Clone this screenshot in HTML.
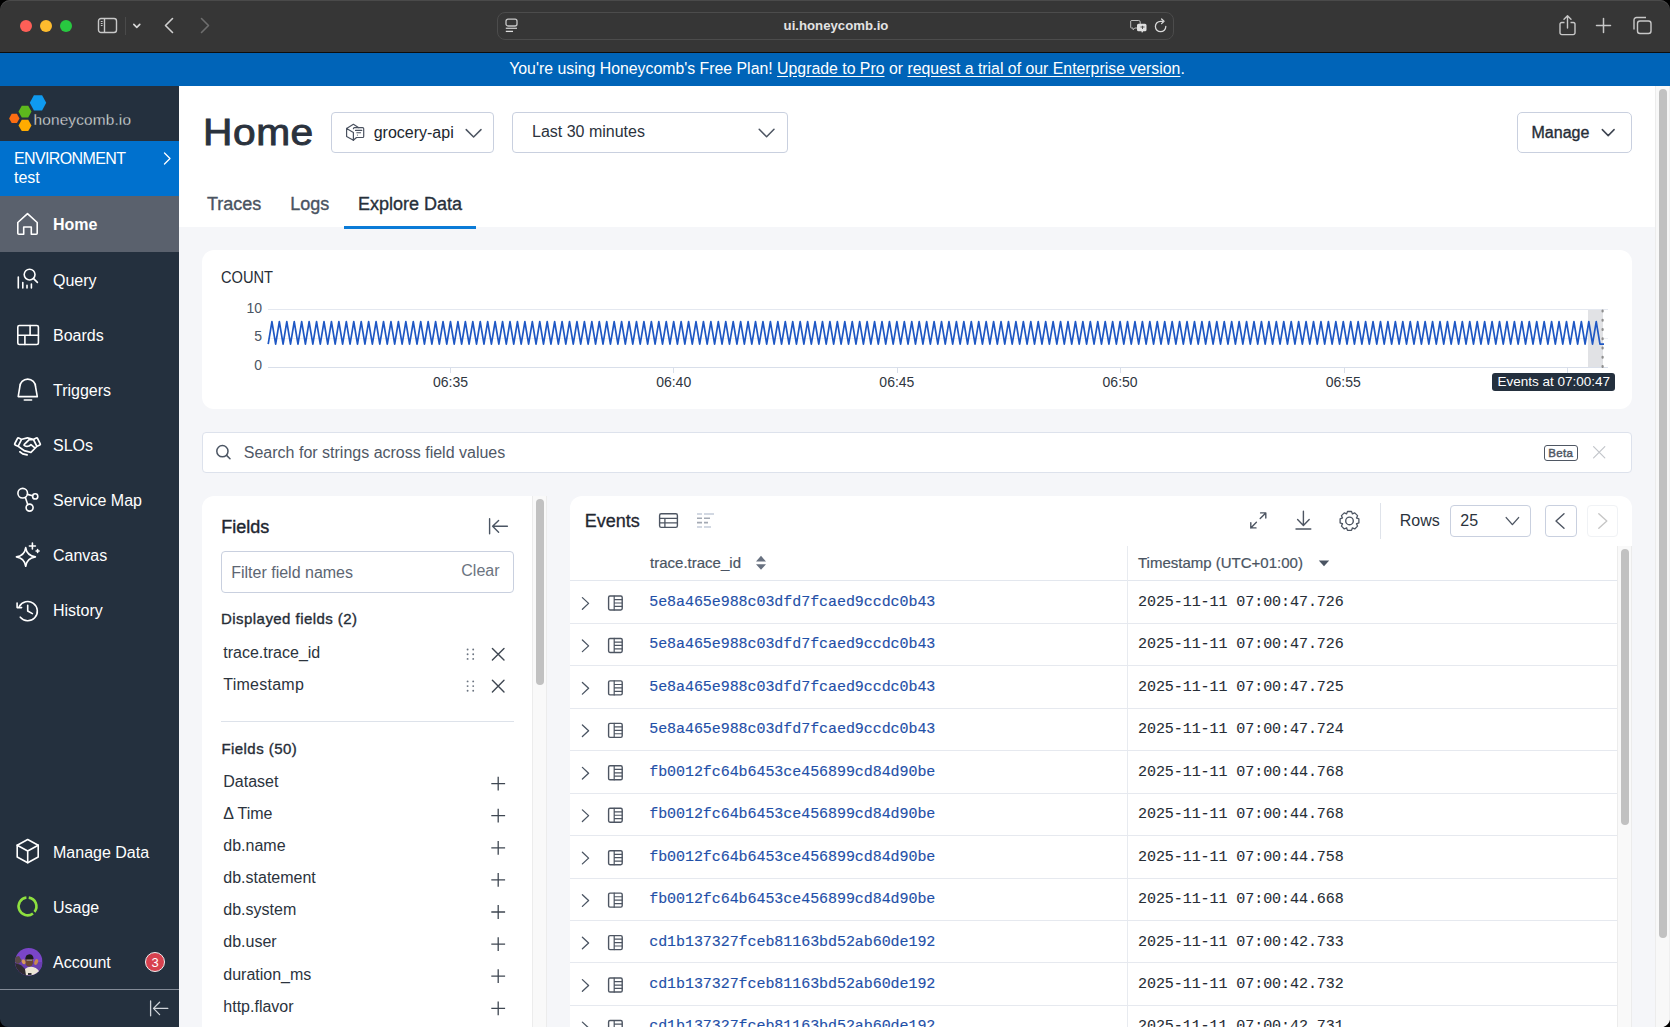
<!DOCTYPE html>
<html><head><meta charset="utf-8">
<style>
*{box-sizing:border-box;margin:0;padding:0}
html,body{width:1670px;height:1027px;overflow:hidden;background:#000;font-family:"Liberation Sans",sans-serif}
.a{position:absolute}
svg{position:absolute;overflow:visible}
#chrome{left:0;top:0;width:1670px;height:53px;background:#363636;border-radius:10px 10px 0 0;border-bottom:1px solid #0d0d0d;box-shadow:inset 0 1px 0 #4a4a4a}
#banner{left:0;top:53px;width:1670px;height:33px;background:#0064b8}
#side{left:0;top:86px;width:179px;height:941px;background:#24303e;border-bottom-left-radius:8px;overflow:hidden}
#main{left:179px;top:86px;width:1476px;height:941px;background:#f5f6f9;overflow:hidden}
#vscroll{left:1655px;top:86px;width:15px;height:941px;background:#f8f8f8;border-left:1px solid #ececec;border-right:1px solid #efefef}
.t{position:absolute;white-space:nowrap;line-height:1}
</style></head><body>
<div id="chrome" class="a">

<div class="a" style="left:20px;top:20px;width:12px;height:12px;border-radius:50%;background:#fe5f57"></div>
<div class="a" style="left:40px;top:20px;width:12px;height:12px;border-radius:50%;background:#febc2e"></div>
<div class="a" style="left:60px;top:20px;width:12px;height:12px;border-radius:50%;background:#28c840"></div>
<svg style="left:97px;top:17px" width="22" height="18" viewBox="0 0 22 18"><rect x="1.5" y="1.5" width="18" height="14" rx="2.5" fill="none" stroke="#c8c8c8" stroke-width="1.4"/><line x1="7.5" y1="1.5" x2="7.5" y2="15.5" stroke="#c8c8c8" stroke-width="1.4"/><line x1="3.8" y1="4.5" x2="5.6" y2="4.5" stroke="#c8c8c8" stroke-width="1"/><line x1="3.8" y1="6.5" x2="5.6" y2="6.5" stroke="#c8c8c8" stroke-width="1"/><line x1="3.8" y1="8.5" x2="5.6" y2="8.5" stroke="#c8c8c8" stroke-width="1"/></svg>
<div class="a" style="left:125px;top:17px;width:1px;height:18px;background:#4a4a4a"></div>
<svg style="left:132px;top:22px" width="10" height="8" viewBox="0 0 10 8"><path d="M1.8 2.4 L4.8 5.4 L7.8 2.4" fill="none" stroke="#d8d8d8" stroke-width="1.6" stroke-linecap="round" stroke-linejoin="round"/></svg>
<svg style="left:163px;top:17px" width="12" height="17" viewBox="0 0 12 17"><path d="M9.5 1.5 L2.5 8.5 L9.5 15.5" fill="none" stroke="#cfcfcf" stroke-width="1.6" stroke-linecap="round" stroke-linejoin="round"/></svg>
<svg style="left:199px;top:17px" width="12" height="17" viewBox="0 0 12 17"><path d="M2.5 1.5 L9.5 8.5 L2.5 15.5" fill="none" stroke="#6e6e6e" stroke-width="1.6" stroke-linecap="round" stroke-linejoin="round"/></svg>
<div class="a" style="left:497px;top:12px;width:677px;height:28px;border-radius:8px;border:1px solid #4c4c4c;background:#363636"></div>
<svg style="left:505px;top:18px" width="14" height="16" viewBox="0 0 14 16"><rect x="1" y="1.2" width="11" height="6.8" rx="2" fill="none" stroke="#c8c8c8" stroke-width="1.3"/><line x1="0.8" y1="10.3" x2="12" y2="10.3" stroke="#c8c8c8" stroke-width="1.3"/><line x1="0.8" y1="13.4" x2="8" y2="13.4" stroke="#dddddd" stroke-width="1.3"/></svg>
<div class="t" style="left:700px;top:19px;width:272px;text-align:center;font-size:13.2px;font-weight:bold;color:#e3e3e3">ui.honeycomb.io</div>
<svg style="left:1130px;top:19px" width="18" height="15" viewBox="0 0 18 15"><path d="M1.2 1.5 h7.5 a1.5 1.5 0 0 1 1.5 1.5 v4.5 a1.5 1.5 0 0 1 -1.5 1.5 h-4 l-1.5 1.8 l-0.3 -1.8 h-1.7 a0.5 .5 0 0 1 -.5 -.5 v-6.5 z" fill="none" stroke="#bdbdbd" stroke-width="1"/><path d="M8.5 4.8 h6.5 a1.5 1.5 0 0 1 1.5 1.5 v4.5 a1.5 1.5 0 0 1 -1.5 1.5 h-1.8 l-1.2 1.8 l-0.6 -1.8 h-2.9 a1.5 1.5 0 0 1 -1.5 -1.5 v-4.5 a1.5 1.5 0 0 1 1.5 -1.5z" fill="#e0e0e0"/><path d="M10.5 8 h4 M12.5 6.8 v3.2" stroke="#444" stroke-width="0.9"/></svg>
<svg style="left:1154px;top:18px" width="14" height="16" viewBox="0 0 14 16"><path d="M11.8 8.5 A5.2 5.2 0 1 1 6.6 3.3 H9" fill="none" stroke="#d8d8d8" stroke-width="1.3" stroke-linecap="round"/><path d="M7.6 1 L10 3.3 L7.6 5.6" fill="none" stroke="#d8d8d8" stroke-width="1.3" stroke-linecap="round" stroke-linejoin="round"/></svg>
<svg style="left:1558px;top:14px" width="19" height="22" viewBox="0 0 19 22"><path d="M6.5 8.5 H3.8 a1.8 1.8 0 0 0 -1.8 1.8 v8.5 a1.8 1.8 0 0 0 1.8 1.8 h11.4 a1.8 1.8 0 0 0 1.8 -1.8 v-8.5 a1.8 1.8 0 0 0 -1.8 -1.8 H12.5" fill="none" stroke="#c8c8c8" stroke-width="1.4"/><path d="M9.5 14 V2 M6 5.2 L9.5 1.7 L13 5.2" fill="none" stroke="#c8c8c8" stroke-width="1.4" stroke-linecap="round" stroke-linejoin="round"/></svg>
<svg style="left:1595px;top:17px" width="17" height="17" viewBox="0 0 17 17"><path d="M8.5 1.5 V15.5 M1.5 8.5 H15.5" stroke="#c8c8c8" stroke-width="1.5" stroke-linecap="round"/></svg>
<svg style="left:1632px;top:16px" width="21" height="19" viewBox="0 0 21 19"><rect x="5.5" y="5" width="13.5" height="12.5" rx="2.5" fill="none" stroke="#c8c8c8" stroke-width="1.4"/><path d="M2 13.5 V4 a2.5 2.5 0 0 1 2.5 -2.5 H14" fill="none" stroke="#c8c8c8" stroke-width="1.4"/></svg>

</div>
<div id="banner" class="a"></div>
<div class="t" style="left:12px;top:61px;width:1670px;text-align:center;font-size:15.85px;color:#fff">You're using Honeycomb's Free Plan! <span style="text-decoration:underline;text-underline-offset:2px">Upgrade to Pro</span> or <span style="text-decoration:underline;text-underline-offset:2px">request a trial of our Enterprise version</span>.</div>
<div id="side" class="a">
<svg style="left:0;top:0" width="60" height="54" viewBox="0 86 60 54">
<path d="M29.80 102.80 L33.90 95.20 L42.10 95.20 L46.20 102.80 L42.10 110.40 L33.90 110.40 Z" fill="#0f9af0"/>
<path d="M18.50 111.60 L21.75 105.80 L28.25 105.80 L31.50 111.60 L28.25 117.40 L21.75 117.40 Z" fill="#5db81d"/>
<path d="M9.10 118.40 L11.70 113.70 L16.90 113.70 L19.50 118.40 L16.90 123.10 L11.70 123.10 Z" fill="#fb6d12"/>
<path d="M18.50 125.40 L21.75 119.70 L28.25 119.70 L31.50 125.40 L28.25 131.10 L21.75 131.10 Z" fill="#ffab00"/>
</svg>
<div class="t" style="left:33.5px;top:26px;font-size:15.4px;color:#f2f2f2;letter-spacing:0.15px;-webkit-text-stroke:0.4px #24303e">honeycomb.io</div><div class="a" style="left:0;top:55px;width:179px;height:55px;background:#0071ce"></div>
<div class="t" style="left:14px;top:65px;font-size:16px;color:#fff;letter-spacing:-0.62px">ENVIRONMENT</div>
<div class="t" style="left:14px;top:84px;font-size:16px;color:#fff">test</div>
<svg style="left:162px;top:65px" width="10" height="15" viewBox="0 0 10 15"><path d="M2.5 2 L8 7.5 L2.5 13" fill="none" stroke="#fff" stroke-width="1.3" stroke-linecap="round" stroke-linejoin="round"/></svg>
<div class="a" style="left:0;top:110px;width:179px;height:56px;background:#5a616d"></div><svg style="left:10px;top:119px" width="35" height="35" viewBox="10 205 35 35"><path d="M17.8 222.5 L27.5 213.6 L37.2 222.5 V233.2 a1 1 0 0 1 -1 1 H31.3 V227 H23.7 V234.2 H18.8 a1 1 0 0 1 -1 -1 Z" fill="none" stroke="#ffffff" stroke-width="1.6" stroke-linecap="round" stroke-linejoin="round"/></svg><div class="t" style="left:53px;top:131px;font-size:16px;color:#fff;font-weight:bold">Home</div><svg style="left:10px;top:176px" width="35" height="35" viewBox="10 262 35 35"><circle cx="29.6" cy="274.6" r="5.4" fill="none" stroke="#ffffff" stroke-width="1.6" stroke-linecap="round" stroke-linejoin="round"/><path d="M33.6 278.6 L37.4 282.4" fill="none" stroke="#ffffff" stroke-width="1.6" stroke-linecap="round" stroke-linejoin="round"/><path d="M18.3 277 V288 M22.8 282.5 V288 M27 285.2 V288 M31.4 284 V288" fill="none" stroke="#ffffff" stroke-width="1.6" stroke-linecap="round" stroke-linejoin="round"/></svg><div class="t" style="left:53px;top:186.5px;font-size:16px;color:#fff;font-weight:normal">Query</div><svg style="left:10px;top:232px" width="35" height="35" viewBox="10 318 35 35"><rect x="17.8" y="325.5" width="20.6" height="19" rx="1.6" fill="none" stroke="#ffffff" stroke-width="1.6" stroke-linecap="round" stroke-linejoin="round"/><path d="M17.8 335.3 H38.4 M30.1 325.5 V335.3 M24.9 335.3 V344.5" fill="none" stroke="#ffffff" stroke-width="1.6" stroke-linecap="round" stroke-linejoin="round"/></svg><div class="t" style="left:53px;top:241.60000000000002px;font-size:16px;color:#fff;font-weight:normal">Boards</div><svg style="left:10px;top:286px" width="35" height="35" viewBox="10 372 35 35"><path d="M18.2 396.6 L19.8 387 a7.9 7.9 0 0 1 15.8 0 L37.3 396.6 Z" fill="none" stroke="#ffffff" stroke-width="1.6" stroke-linecap="round" stroke-linejoin="round"/><path d="M24.3 400 H31.6" fill="none" stroke="#ffffff" stroke-width="1.6" stroke-linecap="round" stroke-linejoin="round"/></svg><div class="t" style="left:53px;top:296.8px;font-size:16px;color:#fff;font-weight:normal">Triggers</div><svg style="left:10px;top:344px" width="35" height="35" viewBox="10 430 35 35"><path transform="translate(13.82 431.84) scale(0.1069)" d="M254.3,107.91,228.78,56.85a16,16,0,0,0-21.47-7.15L182.44,62.13,130.05,48.27a8.14,8.14,0,0,0-4.1,0L73.56,62.13,48.69,49.7a16,16,0,0,0-21.47,7.15L1.69,107.9a16,16,0,0,0,7.15,21.47l27,13.51,55.49,39.63a8.060,8.060,0,0,0,2.71,1.25l64,16a8,8,0,0,0,7.6-2.1l55.07-55.08,26.42-13.210a16,16,0,0,0,7.15-21.46Zm-54.89,33.37L165,113.72a8,8,0,0,0-10.68.61C136.51,132.27,116.66,130,104,122L147.24,80h31.81l27.21,54.41ZM41.53,64,62,74.22,36.43,125.27,16,115.06Zm116,119.13L99.42,168.610l-49.2-35.14,28-56L128,64.280l9.8,2.59-45,43.71-.08.09a16,16,0,0,0,2.72,24.81c20.56,13.13,45.370,11,64.91-5L188,152.66Zm62-57.870-25.52-51L214.47,64,240,115.06Zm-87.75,92.67a8,8,0,0,1-7.75,6.06,8.13,8.13,0,0,1-1.95-.24L80.41,213.33a7.89,7.89,0,0,1-2.71-1.25L51.35,193.26a8,8,0,0,1,9.3-13l25.11,17.94L126,208.24A8,8,0,0,1,131.82,217.94Z" fill="#fff"/></svg><div class="t" style="left:53px;top:351.9px;font-size:16px;color:#fff;font-weight:normal">SLOs</div><svg style="left:10px;top:396px" width="35" height="35" viewBox="10 482 35 35"><circle cx="22.7" cy="493.2" r="4.8" fill="none" stroke="#ffffff" stroke-width="1.6" stroke-linecap="round" stroke-linejoin="round"/><circle cx="35.2" cy="496.4" r="2.6" fill="none" stroke="#ffffff" stroke-width="1.6" stroke-linecap="round" stroke-linejoin="round"/><circle cx="29.6" cy="507.6" r="3.5" fill="none" stroke="#ffffff" stroke-width="1.6" stroke-linecap="round" stroke-linejoin="round"/><path d="M27.4 494.4 L32.6 495.7 M25.3 497.3 L27.7 504.6" fill="none" stroke="#ffffff" stroke-width="1.6" stroke-linecap="round" stroke-linejoin="round"/></svg><div class="t" style="left:53px;top:407.1px;font-size:16px;color:#fff;font-weight:normal">Service Map</div><svg style="left:10px;top:452px" width="35" height="35" viewBox="10 538 35 35"><path d="M25.7 547.6 Q26.8 555.6 35.4 556.9 Q26.8 558.2 25.7 566.3 Q24.6 558.2 16.4 556.9 Q24.6 555.6 25.7 547.6 Z" fill="none" stroke="#ffffff" stroke-width="1.6" stroke-linecap="round" stroke-linejoin="round"/><path d="M32.4 543 V549 M29.4 546 H35.4" fill="none" stroke="#ffffff" stroke-width="1.6" stroke-linecap="round" stroke-linejoin="round"/><path d="M37.6 549.5 V552.5 M36.1 551 H39.1" fill="none" stroke="#ffffff" stroke-width="1.6" stroke-linecap="round" stroke-linejoin="round"/></svg><div class="t" style="left:53px;top:462.20000000000005px;font-size:16px;color:#fff;font-weight:normal">Canvas</div><svg style="left:10px;top:506px" width="35" height="35" viewBox="10 592 35 35"><path d="M19.3 606.5 A9.6 9.6 0 1 1 20.3 617.2" fill="none" stroke="#ffffff" stroke-width="1.6" stroke-linecap="round" stroke-linejoin="round"/><path d="M17.1 603 V607.6 H21.6" fill="none" stroke="#ffffff" stroke-width="1.6" stroke-linecap="round" stroke-linejoin="round"/><path d="M27.7 605.2 V611 L32.4 613.6" fill="none" stroke="#ffffff" stroke-width="1.6" stroke-linecap="round" stroke-linejoin="round"/></svg><div class="t" style="left:53px;top:517.4px;font-size:16px;color:#fff;font-weight:normal">History</div><svg style="left:10px;top:749px" width="35" height="35" viewBox="10 835 35 35"><path d="M27.7 839.5 L38.2 845.2 V857 L27.7 862.7 L17.2 857 V845.2 Z" fill="none" stroke="#ffffff" stroke-width="1.6" stroke-linecap="round" stroke-linejoin="round"/><path d="M17.2 845.2 L27.7 851 L38.2 845.2 M27.7 851 V862.7" fill="none" stroke="#ffffff" stroke-width="1.6" stroke-linecap="round" stroke-linejoin="round"/></svg><div class="t" style="left:53px;top:758.5px;font-size:16px;color:#fff;font-weight:normal">Manage Data</div><svg style="left:10px;top:806px" width="35" height="35" viewBox="10 892 35 35"><path d="M28.74 897.59 A8.9 8.9 0 0 1 34.51 911.88 M32.98 913.41 A8.9 8.9 0 1 1 26.42 897.57" fill="none" stroke="#8ee03f" stroke-width="2.6"/></svg><div class="t" style="left:53px;top:814px;font-size:16px;color:#fff;font-weight:normal">Usage</div><svg style="left:14.5px;top:861.7px" width="27.5" height="27.5" viewBox="0 0 27.5 27.5"><defs><clipPath id="avc"><circle cx="13.75" cy="13.75" r="13.75"/></clipPath></defs><g clip-path="url(#avc)">
<rect width="27.5" height="27.5" fill="#7a45c8"/>
<rect y="14" width="27.5" height="14" fill="#6a3fb0"/>
<path d="M0 15 L6 17 L11 22 L14 27.5 L0 27.5 Z" fill="#2f2b30"/>
<path d="M0 9 L4 8 L7 13 L3 16 L0 14 Z" fill="#5a4a48"/>
<path d="M10 21 Q13.5 18 18 19 Q24 20 26 27.5 L11 27.5 Z" fill="#ece6d6"/>
<ellipse cx="14.2" cy="13.6" rx="3.9" ry="5" fill="#6b4632"/>
<path d="M10.2 11.2 Q10.5 6.4 14.4 6.2 Q18.4 6.4 18.6 11 Z" fill="#1d1b1f"/>
<rect x="11.6" y="11.6" width="5.6" height="1.4" fill="#9aa0a8" opacity="0.7"/>
<ellipse cx="8.6" cy="13.8" rx="1.8" ry="2.6" fill="#d79a5a" transform="rotate(-25 8.6 13.8)"/>
<ellipse cx="21.2" cy="14" rx="1.8" ry="3" fill="#c8894f" transform="rotate(20 21.2 14)"/>
<rect x="13" y="25" width="3.5" height="2" fill="#333"/>
</g></svg>
<div class="t" style="left:53px;top:868.5px;font-size:16px;color:#fff;font-weight:normal">Account</div><div class="a" style="left:145px;top:866px;width:20px;height:20px;border-radius:50%;background:#d7414f;border:1px solid #f0f0f0"></div>
<div class="t" style="left:145px;top:870px;width:20px;text-align:center;font-size:13px;color:#fff">3</div>
<div class="a" style="left:0;top:903px;width:179px;height:1px;background:#838b97"></div><svg style="left:140px;top:909px" width="35" height="30" viewBox="140 995 35 30"><path d="M150.6 1001 V1015.8 M167.8 1008.4 H153.5 M159.6 1002.2 L153.5 1008.4 L159.6 1014.6" fill="none" stroke="#d0d4da" stroke-width="1.3" stroke-linecap="round" stroke-linejoin="round"/></svg>
</div>
<div id="main" class="a"><div class="a" style="left:-179px;top:-86px;width:1670px;height:1027px">
<div class="a" style="left:179px;top:86px;width:1476.00px;height:141.00px;background:#fff"></div><div class="t" style="left:202.50px;top:114px;font-size:37px;color:#2a323d;transform-origin:0 0;transform:scaleX(1.1);letter-spacing:0.5px;-webkit-text-stroke:0.9px #2a323d">Home</div><div class="a" style="left:331px;top:112px;width:163.00px;height:41.00px;border:1px solid #c9d0df;border-radius:4px;background:#fff"></div><svg style="left:344px;top:122px" width="24" height="22" viewBox="344 122 24 22"><path d="M353.4 124.3 L346.6 128.4 V136.4 L353.4 140.3 M346.6 128.4 L353.4 132.4 V140.3 M353.4 124.3 L358.8 127.7" fill="none" stroke="#4a5260" stroke-width="1.2" stroke-linecap="round" stroke-linejoin="round"/><path d="M353.4 128.7 Q353.4 127.7 354.4 127.7 H362.6 Q363.7 127.7 363.7 128.8 V136.4 Q363.7 137.5 362.6 137.5 H356.5 L353.4 140.3" fill="none" stroke="#4a5260" stroke-width="1.2" stroke-linecap="round" stroke-linejoin="round"/><path d="M355.5 130.4 H361.8 M356.8 132.7 H360.6" fill="none" stroke="#4a5260" stroke-width="1.1" stroke-linecap="round" stroke-linejoin="round"/><circle cx="357.4" cy="135.1" r="0.55" fill="#4a5260"/></svg><div class="t" style="left:373.70px;top:125px;font-size:16px;color:#20262e">grocery-api</div><svg style="left:462px;top:125px" width="24" height="16" viewBox="462 125 24 16"><path d="M466.2 129.6 L473.6 137 L481 129.6" fill="none" stroke="#4d5562" stroke-width="1.5" stroke-linecap="round" stroke-linejoin="round"/></svg><div class="a" style="left:512px;top:112px;width:276.00px;height:41.00px;border:1px solid #c9d0df;border-radius:4px;background:#fff"></div><div class="t" style="left:532.00px;top:124px;font-size:16px;color:#2b323c">Last 30 minutes</div><svg style="left:755px;top:125px" width="24" height="16" viewBox="755 125 24 16"><path d="M759.2 129.2 L766.6 136.8 L774 129.2" fill="none" stroke="#4d5562" stroke-width="1.5" stroke-linecap="round" stroke-linejoin="round"/></svg><div class="a" style="left:1517px;top:112px;width:115.00px;height:41.00px;border:1px solid #c9d0df;border-radius:5px;background:#fff"></div><div class="t" style="left:1531.50px;top:125px;font-size:16px;color:#262d37;-webkit-text-stroke:0.35px #262d37">Manage</div><svg style="left:1598px;top:125px" width="20" height="16" viewBox="1598 125 20 16"><path d="M1602.3 129.6 L1608.2 135.6 L1614.1 129.6" fill="none" stroke="#3d4450" stroke-width="1.5" stroke-linecap="round" stroke-linejoin="round"/></svg><div class="t" style="left:207.00px;top:195px;font-size:18px;color:#4a5361;-webkit-text-stroke:0.35px #4a5361">Traces</div><div class="t" style="left:290.20px;top:195px;font-size:18px;color:#4a5361;-webkit-text-stroke:0.35px #4a5361">Logs</div><div class="t" style="left:358.00px;top:195px;font-size:18px;color:#27303b;-webkit-text-stroke:0.35px #27303b">Explore Data</div><div class="a" style="left:344px;top:226px;width:132.00px;height:3.00px;background:#0b7bd7"></div>
<div class="a" style="left:202px;top:250px;width:1430.00px;height:159.00px;background:#fff;border-radius:12px"></div><div class="t" style="left:221.00px;top:270px;font-size:16px;color:#262d36;transform-origin:0 0;transform:scaleX(0.915)">COUNT</div><div class="t" style="left:200px;top:301px;width:62px;text-align:right;font-size:14px;color:#4b5563">10</div><div class="t" style="left:200px;top:329px;width:62px;text-align:right;font-size:14px;color:#4b5563">5</div><div class="t" style="left:200px;top:358px;width:62px;text-align:right;font-size:14px;color:#4b5563">0</div><div class="a" style="left:268px;top:309px;width:1340.00px;height:1.00px;background:#e4e8f0"></div><div class="a" style="left:268px;top:338px;width:1340.00px;height:1.00px;background:#eef0f5"></div><div class="a" style="left:268px;top:367px;width:1340.00px;height:1.00px;background:#d9dfea"></div><div class="a" style="left:450px;top:368px;width:1.00px;height:5.00px;background:#d9dfea"></div><div class="t" style="left:410.5px;top:375px;width:80px;text-align:center;font-size:14px;color:#2f3640">06:35</div><div class="a" style="left:673px;top:368px;width:1.00px;height:5.00px;background:#d9dfea"></div><div class="t" style="left:633.7px;top:375px;width:80px;text-align:center;font-size:14px;color:#2f3640">06:40</div><div class="a" style="left:897px;top:368px;width:1.00px;height:5.00px;background:#d9dfea"></div><div class="t" style="left:856.9px;top:375px;width:80px;text-align:center;font-size:14px;color:#2f3640">06:45</div><div class="a" style="left:1120px;top:368px;width:1.00px;height:5.00px;background:#d9dfea"></div><div class="t" style="left:1080.1px;top:375px;width:80px;text-align:center;font-size:14px;color:#2f3640">06:50</div><div class="a" style="left:1344px;top:368px;width:1.00px;height:5.00px;background:#d9dfea"></div><div class="t" style="left:1303.3px;top:375px;width:80px;text-align:center;font-size:14px;color:#2f3640">06:55</div><div class="a" style="left:1567px;top:368px;width:1.00px;height:5.00px;background:#d9dfea"></div><div class="a" style="left:1588px;top:310px;width:14.50px;height:57.00px;background:#e1e2e5"></div><svg style="left:0;top:0" width="1670" height="1027" viewBox="0 0 1670 1027"><polyline points="268.20,344.2 271.92,321.6 275.64,344.2 279.36,321.6 283.08,344.2 286.80,321.6 290.52,344.2 294.24,321.6 297.96,344.2 301.68,321.6 305.40,344.2 309.12,321.6 312.84,344.2 316.56,321.6 320.28,344.2 324.00,321.6 327.72,344.2 331.44,321.6 335.16,344.2 338.88,321.6 342.60,344.2 346.32,321.6 350.04,344.2 353.76,321.6 357.48,344.2 361.20,321.6 364.92,344.2 368.64,321.6 372.36,344.2 376.08,321.6 379.80,344.2 383.52,321.6 387.24,344.2 390.96,321.6 394.68,344.2 398.40,321.6 402.12,344.2 405.84,321.6 409.56,344.2 413.28,321.6 417.00,344.2 420.72,321.6 424.44,344.2 428.16,321.6 431.88,344.2 435.60,321.6 439.32,344.2 443.04,321.6 446.76,344.2 450.48,321.6 454.20,344.2 457.92,321.6 461.64,344.2 465.36,321.6 469.08,344.2 472.80,321.6 476.52,344.2 480.24,321.6 483.96,344.2 487.68,321.6 491.40,344.2 495.12,321.6 498.84,344.2 502.56,321.6 506.28,344.2 510.00,321.6 513.72,344.2 517.44,321.6 521.16,344.2 524.88,321.6 528.60,344.2 532.32,321.6 536.04,344.2 539.76,321.6 543.48,344.2 547.20,321.6 550.92,344.2 554.64,321.6 558.36,344.2 562.08,321.6 565.80,344.2 569.52,321.6 573.24,344.2 576.96,321.6 580.68,344.2 584.40,321.6 588.12,344.2 591.84,321.6 595.56,344.2 599.28,321.6 603.00,344.2 606.72,321.6 610.44,344.2 614.16,321.6 617.88,344.2 621.60,321.6 625.32,344.2 629.04,321.6 632.76,344.2 636.48,321.6 640.20,344.2 643.92,321.6 647.64,344.2 651.36,321.6 655.08,344.2 658.80,321.6 662.52,344.2 666.24,321.6 669.96,344.2 673.68,321.6 677.40,344.2 681.12,321.6 684.84,344.2 688.56,321.6 692.28,344.2 696.00,321.6 699.72,344.2 703.44,321.6 707.16,344.2 710.88,321.6 714.60,344.2 718.32,321.6 722.04,344.2 725.76,321.6 729.48,344.2 733.20,321.6 736.92,344.2 740.64,321.6 744.36,344.2 748.08,321.6 751.80,344.2 755.52,321.6 759.24,344.2 762.96,321.6 766.68,344.2 770.40,321.6 774.12,344.2 777.84,321.6 781.56,344.2 785.28,321.6 789.00,344.2 792.72,321.6 796.44,344.2 800.16,321.6 803.88,344.2 807.60,321.6 811.32,344.2 815.04,321.6 818.76,344.2 822.48,321.6 826.20,344.2 829.92,321.6 833.64,344.2 837.36,321.6 841.08,344.2 844.80,321.6 848.52,344.2 852.24,321.6 855.96,344.2 859.68,321.6 863.40,344.2 867.12,321.6 870.84,344.2 874.56,321.6 878.28,344.2 882.00,321.6 885.72,344.2 889.44,321.6 893.16,344.2 896.88,321.6 900.60,344.2 904.32,321.6 908.04,344.2 911.76,321.6 915.48,344.2 919.20,321.6 922.92,344.2 926.64,321.6 930.36,344.2 934.08,321.6 937.80,344.2 941.52,321.6 945.24,344.2 948.96,321.6 952.68,344.2 956.40,321.6 960.12,344.2 963.84,321.6 967.56,344.2 971.28,321.6 975.00,344.2 978.72,321.6 982.44,344.2 986.16,321.6 989.88,344.2 993.60,321.6 997.32,344.2 1001.04,321.6 1004.76,344.2 1008.48,321.6 1012.20,344.2 1015.92,321.6 1019.64,344.2 1023.36,321.6 1027.08,344.2 1030.80,321.6 1034.52,344.2 1038.24,321.6 1041.96,344.2 1045.68,321.6 1049.40,344.2 1053.12,321.6 1056.84,344.2 1060.56,321.6 1064.28,344.2 1068.00,321.6 1071.72,344.2 1075.44,321.6 1079.16,344.2 1082.88,321.6 1086.60,344.2 1090.32,321.6 1094.04,344.2 1097.76,321.6 1101.48,344.2 1105.20,321.6 1108.92,344.2 1112.64,321.6 1116.36,344.2 1120.08,321.6 1123.80,344.2 1127.52,321.6 1131.24,344.2 1134.96,321.6 1138.68,344.2 1142.40,321.6 1146.12,344.2 1149.84,321.6 1153.56,344.2 1157.28,321.6 1161.00,344.2 1164.72,321.6 1168.44,344.2 1172.16,321.6 1175.88,344.2 1179.60,321.6 1183.32,344.2 1187.04,321.6 1190.76,344.2 1194.48,321.6 1198.20,344.2 1201.92,321.6 1205.64,344.2 1209.36,321.6 1213.08,344.2 1216.80,321.6 1220.52,344.2 1224.24,321.6 1227.96,344.2 1231.68,321.6 1235.40,344.2 1239.12,321.6 1242.84,344.2 1246.56,321.6 1250.28,344.2 1254.00,321.6 1257.72,344.2 1261.44,321.6 1265.16,344.2 1268.88,321.6 1272.60,344.2 1276.32,321.6 1280.04,344.2 1283.76,321.6 1287.48,344.2 1291.20,321.6 1294.92,344.2 1298.64,321.6 1302.36,344.2 1306.08,321.6 1309.80,344.2 1313.52,321.6 1317.24,344.2 1320.96,321.6 1324.68,344.2 1328.40,321.6 1332.12,344.2 1335.84,321.6 1339.56,344.2 1343.28,321.6 1347.00,344.2 1350.72,321.6 1354.44,344.2 1358.16,321.6 1361.88,344.2 1365.60,321.6 1369.32,344.2 1373.04,321.6 1376.76,344.2 1380.48,321.6 1384.20,344.2 1387.92,321.6 1391.64,344.2 1395.36,321.6 1399.08,344.2 1402.80,321.6 1406.52,344.2 1410.24,321.6 1413.96,344.2 1417.68,321.6 1421.40,344.2 1425.12,321.6 1428.84,344.2 1432.56,321.6 1436.28,344.2 1440.00,321.6 1443.72,344.2 1447.44,321.6 1451.16,344.2 1454.88,321.6 1458.60,344.2 1462.32,321.6 1466.04,344.2 1469.76,321.6 1473.48,344.2 1477.20,321.6 1480.92,344.2 1484.64,321.6 1488.36,344.2 1492.08,321.6 1495.80,344.2 1499.52,321.6 1503.24,344.2 1506.96,321.6 1510.68,344.2 1514.40,321.6 1518.12,344.2 1521.84,321.6 1525.56,344.2 1529.28,321.6 1533.00,344.2 1536.72,321.6 1540.44,344.2 1544.16,321.6 1547.88,344.2 1551.60,321.6 1555.32,344.2 1559.04,321.6 1562.76,344.2 1566.48,321.6 1570.20,344.2 1573.92,321.6 1577.64,344.2 1581.36,321.6 1585.08,344.2 1588.80,321.6 1592.52,344.2 1596.24,321.6 1599.96,344.2 1604,344.2" fill="none" stroke="#1e57c4" stroke-width="1.7" stroke-linejoin="round"/><line x1="1602.6" y1="310.5" x2="1602.6" y2="367" stroke="#8d8d8d" stroke-width="2.2" stroke-dasharray="0.9 8.35" stroke-linecap="round"/></svg><div class="a" style="left:1492px;top:373px;width:123.00px;height:18.00px;background:#24303e;border-radius:3px"></div><div class="t" style="left:1497.50px;top:375px;font-size:13.5px;color:#fff">Events at 07:00:47</div><div class="a" style="left:202px;top:432px;width:1430.00px;height:41.00px;background:#fff;border:1px solid #dde2ec;border-radius:4px"></div><svg style="left:212px;top:441px" width="24" height="24" viewBox="212 441 24 24"><circle cx="222.4" cy="451.2" r="5.6" fill="none" stroke="#4b5563" stroke-width="1.5" stroke-linecap="round" stroke-linejoin="round"/><path d="M226.6 455.4 L230 458.8" fill="none" stroke="#4b5563" stroke-width="1.5" stroke-linecap="round" stroke-linejoin="round"/></svg><div class="t" style="left:243.80px;top:445px;font-size:16px;color:#4f5866">Search for strings across field values</div><div class="a" style="left:1544px;top:444.5px;width:34.00px;height:16.00px;border:1.8px solid #4f5763;border-radius:3px"></div><div class="t" style="left:1548.30px;top:448px;font-size:11.5px;color:#4f5763;-webkit-text-stroke:0.45px #4f5763;letter-spacing:0.3px">Beta</div><svg style="left:1590px;top:443px" width="20" height="18" viewBox="1590 443 20 18"><path d="M1593.6 446.6 L1604.8 457.8 M1604.8 446.6 L1593.6 457.8" fill="none" stroke="#c2c5ca" stroke-width="1.2" stroke-linecap="round" stroke-linejoin="round"/></svg><div class="a" style="left:202px;top:496px;width:345.00px;height:531.00px;background:#fff;border-radius:12px 0 0 0"></div><div class="a" style="left:532px;top:496px;width:15.00px;height:531.00px;background:#f9f9f9;border-left:1px solid #ececec;border-right:1px solid #ececec"></div><div class="a" style="left:536px;top:499px;width:8.00px;height:186.00px;background:#c1c1c1;border-radius:4px"></div><div class="t" style="left:221.30px;top:518px;font-size:18px;color:#1f2731;-webkit-text-stroke:0.4px #1f2731">Fields</div><svg style="left:484px;top:514px" width="28" height="24" viewBox="484 514 28 24"><path d="M489.6 518.8 V533.8 M507.4 526.3 H492.6 M498.6 520.4 L492.6 526.3 L498.6 532.2" fill="none" stroke="#4b5563" stroke-width="1.4" stroke-linecap="round" stroke-linejoin="round"/></svg><div class="a" style="left:221px;top:551px;width:293.00px;height:42.00px;border:1px solid #c9d0df;border-radius:4px"></div><div class="t" style="left:231.20px;top:565px;font-size:16px;color:#5d6673">Filter field names</div><div class="t" style="left:461.30px;top:563px;font-size:16px;color:#6b7480">Clear</div><div class="t" style="left:221.00px;top:611px;font-size:15px;color:#262d37;letter-spacing:0.45px;-webkit-text-stroke:0.35px #262d37">Displayed fields (2)</div><div class="t" style="left:223.30px;top:645px;font-size:16px;color:#2b333d">trace.trace_id</div><svg style="left:460px;top:644px" width="20" height="20" viewBox="460 644 20 20"><circle cx="467.6" cy="649.50" r="0.95" fill="#6b7480"/><circle cx="467.6" cy="654.20" r="0.95" fill="#6b7480"/><circle cx="467.6" cy="658.90" r="0.95" fill="#6b7480"/><circle cx="473.2" cy="649.50" r="0.95" fill="#6b7480"/><circle cx="473.2" cy="654.20" r="0.95" fill="#6b7480"/><circle cx="473.2" cy="658.90" r="0.95" fill="#6b7480"/></svg><svg style="left:488px;top:644px" width="20" height="20" viewBox="488 644 20 20"><path d="M492.4 648.40 L504 660.00 M504 648.40 L492.4 660.00" fill="none" stroke="#3f4752" stroke-width="1.4" stroke-linecap="round" stroke-linejoin="round"/></svg><div class="t" style="left:223.30px;top:677px;font-size:16px;color:#2b333d;letter-spacing:0.25px">Timestamp</div><svg style="left:460px;top:676px" width="20" height="20" viewBox="460 676 20 20"><circle cx="467.6" cy="681.40" r="0.95" fill="#6b7480"/><circle cx="467.6" cy="686.10" r="0.95" fill="#6b7480"/><circle cx="467.6" cy="690.80" r="0.95" fill="#6b7480"/><circle cx="473.2" cy="681.40" r="0.95" fill="#6b7480"/><circle cx="473.2" cy="686.10" r="0.95" fill="#6b7480"/><circle cx="473.2" cy="690.80" r="0.95" fill="#6b7480"/></svg><svg style="left:488px;top:676px" width="20" height="20" viewBox="488 676 20 20"><path d="M492.4 680.30 L504 691.90 M504 680.30 L492.4 691.90" fill="none" stroke="#3f4752" stroke-width="1.4" stroke-linecap="round" stroke-linejoin="round"/></svg><div class="a" style="left:221px;top:721px;width:293.00px;height:1.00px;background:#dde2ea"></div><div class="t" style="left:221.40px;top:741px;font-size:15px;color:#262d37;letter-spacing:0.45px;-webkit-text-stroke:0.35px #262d37">Fields (50)</div><div class="t" style="left:223.30px;top:774px;font-size:16px;color:#2b333d">Dataset</div><svg style="left:488px;top:773px" width="20" height="20" viewBox="488 773 20 20"><path d="M498.2 776.70 V790.50 M491.3 783.60 H505.1" fill="none" stroke="#3f4752" stroke-width="1.3" stroke-linecap="butt" stroke-linejoin="round"/></svg><div class="t" style="left:223.30px;top:806px;font-size:16px;color:#2b333d">&Delta; Time</div><svg style="left:488px;top:805px" width="20" height="20" viewBox="488 805 20 20"><path d="M498.2 808.80 V822.60 M491.3 815.70 H505.1" fill="none" stroke="#3f4752" stroke-width="1.3" stroke-linecap="butt" stroke-linejoin="round"/></svg><div class="t" style="left:223.30px;top:838px;font-size:16px;color:#2b333d">db.name</div><svg style="left:488px;top:837px" width="20" height="20" viewBox="488 837 20 20"><path d="M498.2 840.90 V854.70 M491.3 847.80 H505.1" fill="none" stroke="#3f4752" stroke-width="1.3" stroke-linecap="butt" stroke-linejoin="round"/></svg><div class="t" style="left:223.30px;top:870px;font-size:16px;color:#2b333d">db.statement</div><svg style="left:488px;top:869px" width="20" height="20" viewBox="488 869 20 20"><path d="M498.2 873.00 V886.80 M491.3 879.90 H505.1" fill="none" stroke="#3f4752" stroke-width="1.3" stroke-linecap="butt" stroke-linejoin="round"/></svg><div class="t" style="left:223.30px;top:902px;font-size:16px;color:#2b333d">db.system</div><svg style="left:488px;top:902px" width="20" height="20" viewBox="488 902 20 20"><path d="M498.2 905.10 V918.90 M491.3 912.00 H505.1" fill="none" stroke="#3f4752" stroke-width="1.3" stroke-linecap="butt" stroke-linejoin="round"/></svg><div class="t" style="left:223.30px;top:934px;font-size:16px;color:#2b333d">db.user</div><svg style="left:488px;top:934px" width="20" height="20" viewBox="488 934 20 20"><path d="M498.2 937.20 V951.00 M491.3 944.10 H505.1" fill="none" stroke="#3f4752" stroke-width="1.3" stroke-linecap="butt" stroke-linejoin="round"/></svg><div class="t" style="left:223.30px;top:967px;font-size:16px;color:#2b333d">duration_ms</div><svg style="left:488px;top:966px" width="20" height="20" viewBox="488 966 20 20"><path d="M498.2 969.30 V983.10 M491.3 976.20 H505.1" fill="none" stroke="#3f4752" stroke-width="1.3" stroke-linecap="butt" stroke-linejoin="round"/></svg><div class="t" style="left:223.30px;top:999px;font-size:16px;color:#2b333d">http.flavor</div><svg style="left:488px;top:998px" width="20" height="20" viewBox="488 998 20 20"><path d="M498.2 1001.40 V1015.20 M491.3 1008.30 H505.1" fill="none" stroke="#3f4752" stroke-width="1.3" stroke-linecap="butt" stroke-linejoin="round"/></svg><div class="a" style="left:570px;top:496px;width:1062.00px;height:531.00px;background:#fff;border-radius:12px 12px 0 0"></div><div class="t" style="left:584.70px;top:512px;font-size:18px;color:#1f2731;-webkit-text-stroke:0.3px #1f2731">Events</div><svg style="left:655px;top:510px" width="28" height="22" viewBox="655 510 28 22"><rect x="659.6" y="513.8" width="17.8" height="13.6" rx="1.6" fill="none" stroke="#4d5562" stroke-width="1.4" stroke-linecap="round" stroke-linejoin="round"/><path d="M659.6 518.3 H677.4 M659.6 522.9 H677.4 M664.9 518.3 V527.4" fill="none" stroke="#4d5562" stroke-width="1.3" stroke-linecap="round" stroke-linejoin="round"/></svg><svg style="left:693px;top:510px" width="26" height="22" viewBox="693 510 26 22"><path d="M697 514 H702 M704 514 H714" fill="none" stroke="#c3cbd9" stroke-width="1.6" stroke-linecap="butt" stroke-linejoin="round"/><path d="M697 518.3 H702 M704 518.3 H710" fill="none" stroke="#a3a9b3" stroke-width="1.6" stroke-linecap="butt" stroke-linejoin="round"/><path d="M697 522.6 H702 M704 522.6 H708" fill="none" stroke="#a3a9b3" stroke-width="1.6" stroke-linecap="butt" stroke-linejoin="round"/><path d="M697 527 H702 M704 527 H711" fill="none" stroke="#c3cbd9" stroke-width="1.6" stroke-linecap="butt" stroke-linejoin="round"/></svg><svg style="left:1246px;top:508px" width="26" height="26" viewBox="1246 508 26 26"><path d="M1260.2 518.5 L1265.8 512.9 M1260.6 512.9 H1265.8 V518.1 M1256.4 522.3 L1250.8 527.9 M1250.8 522.7 V527.9 H1256" fill="none" stroke="#4d5562" stroke-width="1.4" stroke-linecap="round" stroke-linejoin="round"/></svg><svg style="left:1292px;top:508px" width="24" height="26" viewBox="1292 508 24 26"><path d="M1303.4 511.2 V525.4 M1297.6 519.6 L1303.4 525.4 L1309.2 519.6 M1296 529 H1310.8" fill="none" stroke="#4d5562" stroke-width="1.4" stroke-linecap="round" stroke-linejoin="round"/></svg><svg style="left:1336px;top:508px" width="28" height="28" viewBox="1336 508 28 28"><polygon points="1356.48,517.88 1358.89,518.92 1358.89,522.88 1356.48,523.92 1356.57,523.70 1357.54,526.14 1354.74,528.94 1352.30,527.97 1352.52,527.88 1351.48,530.29 1347.52,530.29 1346.48,527.88 1346.70,527.97 1344.26,528.94 1341.46,526.14 1342.43,523.70 1342.52,523.92 1340.11,522.88 1340.11,518.92 1342.52,517.88 1342.43,518.10 1341.46,515.66 1344.26,512.86 1346.70,513.83 1346.48,513.92 1347.52,511.51 1351.48,511.51 1352.52,513.92 1352.30,513.83 1354.74,512.86 1357.54,515.66 1356.57,518.10" fill="none" stroke="#4d5562" stroke-width="1.3" stroke-linecap="round" stroke-linejoin="round"/><circle cx="1349.5" cy="520.9" r="3.8" fill="none" stroke="#4d5562" stroke-width="1.4" stroke-linecap="round" stroke-linejoin="round"/></svg><div class="a" style="left:1380px;top:503px;width:1.00px;height:36.00px;background:#dfe3ea"></div><div class="t" style="left:1399.70px;top:513px;font-size:16px;color:#2b333d">Rows</div><div class="a" style="left:1450px;top:505px;width:81.00px;height:32.00px;border:1px solid #c9d0df;border-radius:4px"></div><div class="t" style="left:1460.30px;top:513px;font-size:16px;color:#2b333d">25</div><svg style="left:1502px;top:512px" width="20" height="18" viewBox="1502 512 20 18"><path d="M1506.2 517.6 L1512.4 524.6 L1518.6 517.6" fill="none" stroke="#4d5562" stroke-width="1.4" stroke-linecap="round" stroke-linejoin="round"/></svg><div class="a" style="left:1545px;top:505px;width:32.00px;height:32.00px;border:1px solid #c9d0df;border-radius:4px"></div><svg style="left:1550px;top:510px" width="20" height="22" viewBox="1550 510 20 22"><path d="M1564 513.8 L1556 521 L1564 528.2" fill="none" stroke="#4d5562" stroke-width="1.4" stroke-linecap="round" stroke-linejoin="round"/></svg><div class="a" style="left:1587px;top:505px;width:31.00px;height:32.00px;border:1px solid #f0f2f5;border-radius:4px"></div><svg style="left:1594px;top:510px" width="20" height="22" viewBox="1594 510 20 22"><path d="M1598.8 513.8 L1606.8 521 L1598.8 528.2" fill="none" stroke="#c6c6c6" stroke-width="1.4" stroke-linecap="round" stroke-linejoin="round"/></svg><div class="a" style="left:570px;top:580px;width:1047.40px;height:1.00px;background:#e3e7ee"></div><div class="a" style="left:1126.5px;top:546px;width:1.00px;height:481.00px;background:#e8ebf0"></div><div class="t" style="left:650.10px;top:555px;font-size:15px;color:#4a5462;-webkit-text-stroke:0.2px #4a5462">trace.trace_id</div><svg style="left:752px;top:553px" width="18" height="20" viewBox="752 553 18 20"><path d="M756 561.4 L761 555.8 L766 561.4 Z M756 564.2 L761 569.8 L766 564.2 Z" fill="#687180"/></svg><div class="t" style="left:1138.00px;top:555px;font-size:15px;color:#4a5462;-webkit-text-stroke:0.2px #4a5462">Timestamp (UTC+01:00)</div><svg style="left:1315px;top:556px" width="18" height="14" viewBox="1315 556 18 14"><path d="M1318.8 560.6 L1329.2 560.6 L1324 566.2 Z" fill="#4a5462"/></svg><svg style="left:576px;top:593px" width="20" height="20" viewBox="576 593 20 20"><path d="M582.4 597.60 L588.6 603.40 L582.4 609.20" fill="none" stroke="#4a5462" stroke-width="1.3" stroke-linecap="round" stroke-linejoin="round"/></svg><svg style="left:604px;top:592px" width="24" height="22" viewBox="604 592 24 22"><rect x="608.6" y="596.00" width="13.6" height="14" rx="1.4" fill="none" stroke="#4d5562" stroke-width="1.4" stroke-linecap="round" stroke-linejoin="round"/><path d="M614.2 596.00 V610.00 M614.2 599.60 H622 M614.2 603.00 H622 M614.2 606.40 H622" fill="none" stroke="#4d5562" stroke-width="1.2" stroke-linecap="round" stroke-linejoin="round"/></svg><div class="t" style="left:649.20px;top:595px;font-size:15px;font-family:'Liberation Mono',monospace;color:#1f50a8;letter-spacing:-0.06px;-webkit-text-stroke:0.15px #1f50a8">5e8a465e988c03dfd7fcaed9ccdc0b43</div><div class="t" style="left:1138.00px;top:595px;font-size:15px;font-family:'Liberation Mono',monospace;color:#262d36;letter-spacing:-0.06px;-webkit-text-stroke:0.1px #262d36">2025-11-11 07:00:47.726</div><div class="a" style="left:570px;top:623px;width:1047.40px;height:1.00px;background:#e6e9ef"></div><svg style="left:576px;top:635px" width="20" height="20" viewBox="576 635 20 20"><path d="M582.4 640.05 L588.6 645.85 L582.4 651.65" fill="none" stroke="#4a5462" stroke-width="1.3" stroke-linecap="round" stroke-linejoin="round"/></svg><svg style="left:604px;top:634px" width="24" height="22" viewBox="604 634 24 22"><rect x="608.6" y="638.45" width="13.6" height="14" rx="1.4" fill="none" stroke="#4d5562" stroke-width="1.4" stroke-linecap="round" stroke-linejoin="round"/><path d="M614.2 638.45 V652.45 M614.2 642.05 H622 M614.2 645.45 H622 M614.2 648.85 H622" fill="none" stroke="#4d5562" stroke-width="1.2" stroke-linecap="round" stroke-linejoin="round"/></svg><div class="t" style="left:649.20px;top:637px;font-size:15px;font-family:'Liberation Mono',monospace;color:#1f50a8;letter-spacing:-0.06px;-webkit-text-stroke:0.15px #1f50a8">5e8a465e988c03dfd7fcaed9ccdc0b43</div><div class="t" style="left:1138.00px;top:637px;font-size:15px;font-family:'Liberation Mono',monospace;color:#262d36;letter-spacing:-0.06px;-webkit-text-stroke:0.1px #262d36">2025-11-11 07:00:47.726</div><div class="a" style="left:570px;top:665px;width:1047.40px;height:1.00px;background:#e6e9ef"></div><svg style="left:576px;top:678px" width="20" height="20" viewBox="576 678 20 20"><path d="M582.4 682.50 L588.6 688.30 L582.4 694.10" fill="none" stroke="#4a5462" stroke-width="1.3" stroke-linecap="round" stroke-linejoin="round"/></svg><svg style="left:604px;top:676px" width="24" height="22" viewBox="604 676 24 22"><rect x="608.6" y="680.90" width="13.6" height="14" rx="1.4" fill="none" stroke="#4d5562" stroke-width="1.4" stroke-linecap="round" stroke-linejoin="round"/><path d="M614.2 680.90 V694.90 M614.2 684.50 H622 M614.2 687.90 H622 M614.2 691.30 H622" fill="none" stroke="#4d5562" stroke-width="1.2" stroke-linecap="round" stroke-linejoin="round"/></svg><div class="t" style="left:649.20px;top:680px;font-size:15px;font-family:'Liberation Mono',monospace;color:#1f50a8;letter-spacing:-0.06px;-webkit-text-stroke:0.15px #1f50a8">5e8a465e988c03dfd7fcaed9ccdc0b43</div><div class="t" style="left:1138.00px;top:680px;font-size:15px;font-family:'Liberation Mono',monospace;color:#262d36;letter-spacing:-0.06px;-webkit-text-stroke:0.1px #262d36">2025-11-11 07:00:47.725</div><div class="a" style="left:570px;top:708px;width:1047.40px;height:1.00px;background:#e6e9ef"></div><svg style="left:576px;top:720px" width="20" height="20" viewBox="576 720 20 20"><path d="M582.4 724.95 L588.6 730.75 L582.4 736.55" fill="none" stroke="#4a5462" stroke-width="1.3" stroke-linecap="round" stroke-linejoin="round"/></svg><svg style="left:604px;top:719px" width="24" height="22" viewBox="604 719 24 22"><rect x="608.6" y="723.35" width="13.6" height="14" rx="1.4" fill="none" stroke="#4d5562" stroke-width="1.4" stroke-linecap="round" stroke-linejoin="round"/><path d="M614.2 723.35 V737.35 M614.2 726.95 H622 M614.2 730.35 H622 M614.2 733.75 H622" fill="none" stroke="#4d5562" stroke-width="1.2" stroke-linecap="round" stroke-linejoin="round"/></svg><div class="t" style="left:649.20px;top:722px;font-size:15px;font-family:'Liberation Mono',monospace;color:#1f50a8;letter-spacing:-0.06px;-webkit-text-stroke:0.15px #1f50a8">5e8a465e988c03dfd7fcaed9ccdc0b43</div><div class="t" style="left:1138.00px;top:722px;font-size:15px;font-family:'Liberation Mono',monospace;color:#262d36;letter-spacing:-0.06px;-webkit-text-stroke:0.1px #262d36">2025-11-11 07:00:47.724</div><div class="a" style="left:570px;top:750px;width:1047.40px;height:1.00px;background:#e6e9ef"></div><svg style="left:576px;top:763px" width="20" height="20" viewBox="576 763 20 20"><path d="M582.4 767.40 L588.6 773.20 L582.4 779.00" fill="none" stroke="#4a5462" stroke-width="1.3" stroke-linecap="round" stroke-linejoin="round"/></svg><svg style="left:604px;top:761px" width="24" height="22" viewBox="604 761 24 22"><rect x="608.6" y="765.80" width="13.6" height="14" rx="1.4" fill="none" stroke="#4d5562" stroke-width="1.4" stroke-linecap="round" stroke-linejoin="round"/><path d="M614.2 765.80 V779.80 M614.2 769.40 H622 M614.2 772.80 H622 M614.2 776.20 H622" fill="none" stroke="#4d5562" stroke-width="1.2" stroke-linecap="round" stroke-linejoin="round"/></svg><div class="t" style="left:649.20px;top:765px;font-size:15px;font-family:'Liberation Mono',monospace;color:#1f50a8;letter-spacing:-0.06px;-webkit-text-stroke:0.15px #1f50a8">fb0012fc64b6453ce456899cd84d90be</div><div class="t" style="left:1138.00px;top:765px;font-size:15px;font-family:'Liberation Mono',monospace;color:#262d36;letter-spacing:-0.06px;-webkit-text-stroke:0.1px #262d36">2025-11-11 07:00:44.768</div><div class="a" style="left:570px;top:793px;width:1047.40px;height:1.00px;background:#e6e9ef"></div><svg style="left:576px;top:805px" width="20" height="20" viewBox="576 805 20 20"><path d="M582.4 809.85 L588.6 815.65 L582.4 821.45" fill="none" stroke="#4a5462" stroke-width="1.3" stroke-linecap="round" stroke-linejoin="round"/></svg><svg style="left:604px;top:804px" width="24" height="22" viewBox="604 804 24 22"><rect x="608.6" y="808.25" width="13.6" height="14" rx="1.4" fill="none" stroke="#4d5562" stroke-width="1.4" stroke-linecap="round" stroke-linejoin="round"/><path d="M614.2 808.25 V822.25 M614.2 811.85 H622 M614.2 815.25 H622 M614.2 818.65 H622" fill="none" stroke="#4d5562" stroke-width="1.2" stroke-linecap="round" stroke-linejoin="round"/></svg><div class="t" style="left:649.20px;top:807px;font-size:15px;font-family:'Liberation Mono',monospace;color:#1f50a8;letter-spacing:-0.06px;-webkit-text-stroke:0.15px #1f50a8">fb0012fc64b6453ce456899cd84d90be</div><div class="t" style="left:1138.00px;top:807px;font-size:15px;font-family:'Liberation Mono',monospace;color:#262d36;letter-spacing:-0.06px;-webkit-text-stroke:0.1px #262d36">2025-11-11 07:00:44.768</div><div class="a" style="left:570px;top:835px;width:1047.40px;height:1.00px;background:#e6e9ef"></div><svg style="left:576px;top:848px" width="20" height="20" viewBox="576 848 20 20"><path d="M582.4 852.30 L588.6 858.10 L582.4 863.90" fill="none" stroke="#4a5462" stroke-width="1.3" stroke-linecap="round" stroke-linejoin="round"/></svg><svg style="left:604px;top:846px" width="24" height="22" viewBox="604 846 24 22"><rect x="608.6" y="850.70" width="13.6" height="14" rx="1.4" fill="none" stroke="#4d5562" stroke-width="1.4" stroke-linecap="round" stroke-linejoin="round"/><path d="M614.2 850.70 V864.70 M614.2 854.30 H622 M614.2 857.70 H622 M614.2 861.10 H622" fill="none" stroke="#4d5562" stroke-width="1.2" stroke-linecap="round" stroke-linejoin="round"/></svg><div class="t" style="left:649.20px;top:850px;font-size:15px;font-family:'Liberation Mono',monospace;color:#1f50a8;letter-spacing:-0.06px;-webkit-text-stroke:0.15px #1f50a8">fb0012fc64b6453ce456899cd84d90be</div><div class="t" style="left:1138.00px;top:850px;font-size:15px;font-family:'Liberation Mono',monospace;color:#262d36;letter-spacing:-0.06px;-webkit-text-stroke:0.1px #262d36">2025-11-11 07:00:44.758</div><div class="a" style="left:570px;top:878px;width:1047.40px;height:1.00px;background:#e6e9ef"></div><svg style="left:576px;top:890px" width="20" height="20" viewBox="576 890 20 20"><path d="M582.4 894.75 L588.6 900.55 L582.4 906.35" fill="none" stroke="#4a5462" stroke-width="1.3" stroke-linecap="round" stroke-linejoin="round"/></svg><svg style="left:604px;top:889px" width="24" height="22" viewBox="604 889 24 22"><rect x="608.6" y="893.15" width="13.6" height="14" rx="1.4" fill="none" stroke="#4d5562" stroke-width="1.4" stroke-linecap="round" stroke-linejoin="round"/><path d="M614.2 893.15 V907.15 M614.2 896.75 H622 M614.2 900.15 H622 M614.2 903.55 H622" fill="none" stroke="#4d5562" stroke-width="1.2" stroke-linecap="round" stroke-linejoin="round"/></svg><div class="t" style="left:649.20px;top:892px;font-size:15px;font-family:'Liberation Mono',monospace;color:#1f50a8;letter-spacing:-0.06px;-webkit-text-stroke:0.15px #1f50a8">fb0012fc64b6453ce456899cd84d90be</div><div class="t" style="left:1138.00px;top:892px;font-size:15px;font-family:'Liberation Mono',monospace;color:#262d36;letter-spacing:-0.06px;-webkit-text-stroke:0.1px #262d36">2025-11-11 07:00:44.668</div><div class="a" style="left:570px;top:920px;width:1047.40px;height:1.00px;background:#e6e9ef"></div><svg style="left:576px;top:933px" width="20" height="20" viewBox="576 933 20 20"><path d="M582.4 937.20 L588.6 943.00 L582.4 948.80" fill="none" stroke="#4a5462" stroke-width="1.3" stroke-linecap="round" stroke-linejoin="round"/></svg><svg style="left:604px;top:931px" width="24" height="22" viewBox="604 931 24 22"><rect x="608.6" y="935.60" width="13.6" height="14" rx="1.4" fill="none" stroke="#4d5562" stroke-width="1.4" stroke-linecap="round" stroke-linejoin="round"/><path d="M614.2 935.60 V949.60 M614.2 939.20 H622 M614.2 942.60 H622 M614.2 946.00 H622" fill="none" stroke="#4d5562" stroke-width="1.2" stroke-linecap="round" stroke-linejoin="round"/></svg><div class="t" style="left:649.20px;top:935px;font-size:15px;font-family:'Liberation Mono',monospace;color:#1f50a8;letter-spacing:-0.06px;-webkit-text-stroke:0.15px #1f50a8">cd1b137327fceb81163bd52ab60de192</div><div class="t" style="left:1138.00px;top:935px;font-size:15px;font-family:'Liberation Mono',monospace;color:#262d36;letter-spacing:-0.06px;-webkit-text-stroke:0.1px #262d36">2025-11-11 07:00:42.733</div><div class="a" style="left:570px;top:962px;width:1047.40px;height:1.00px;background:#e6e9ef"></div><svg style="left:576px;top:975px" width="20" height="20" viewBox="576 975 20 20"><path d="M582.4 979.65 L588.6 985.45 L582.4 991.25" fill="none" stroke="#4a5462" stroke-width="1.3" stroke-linecap="round" stroke-linejoin="round"/></svg><svg style="left:604px;top:974px" width="24" height="22" viewBox="604 974 24 22"><rect x="608.6" y="978.05" width="13.6" height="14" rx="1.4" fill="none" stroke="#4d5562" stroke-width="1.4" stroke-linecap="round" stroke-linejoin="round"/><path d="M614.2 978.05 V992.05 M614.2 981.65 H622 M614.2 985.05 H622 M614.2 988.45 H622" fill="none" stroke="#4d5562" stroke-width="1.2" stroke-linecap="round" stroke-linejoin="round"/></svg><div class="t" style="left:649.20px;top:977px;font-size:15px;font-family:'Liberation Mono',monospace;color:#1f50a8;letter-spacing:-0.06px;-webkit-text-stroke:0.15px #1f50a8">cd1b137327fceb81163bd52ab60de192</div><div class="t" style="left:1138.00px;top:977px;font-size:15px;font-family:'Liberation Mono',monospace;color:#262d36;letter-spacing:-0.06px;-webkit-text-stroke:0.1px #262d36">2025-11-11 07:00:42.732</div><div class="a" style="left:570px;top:1005px;width:1047.40px;height:1.00px;background:#e6e9ef"></div><svg style="left:576px;top:1017px" width="20" height="20" viewBox="576 1017 20 20"><path d="M582.4 1022.10 L588.6 1027.90 L582.4 1033.70" fill="none" stroke="#4a5462" stroke-width="1.3" stroke-linecap="round" stroke-linejoin="round"/></svg><svg style="left:604px;top:1016px" width="24" height="22" viewBox="604 1016 24 22"><rect x="608.6" y="1020.50" width="13.6" height="14" rx="1.4" fill="none" stroke="#4d5562" stroke-width="1.4" stroke-linecap="round" stroke-linejoin="round"/><path d="M614.2 1020.50 V1034.50 M614.2 1024.10 H622 M614.2 1027.50 H622 M614.2 1030.90 H622" fill="none" stroke="#4d5562" stroke-width="1.2" stroke-linecap="round" stroke-linejoin="round"/></svg><div class="t" style="left:649.20px;top:1019px;font-size:15px;font-family:'Liberation Mono',monospace;color:#1f50a8;letter-spacing:-0.06px;-webkit-text-stroke:0.15px #1f50a8">cd1b137327fceb81163bd52ab60de192</div><div class="t" style="left:1138.00px;top:1019px;font-size:15px;font-family:'Liberation Mono',monospace;color:#262d36;letter-spacing:-0.06px;-webkit-text-stroke:0.1px #262d36">2025-11-11 07:00:42.731</div><div class="a" style="left:1617.4px;top:546px;width:14.60px;height:481.00px;background:#f9f9f9;border-left:1px solid #ececec;border-right:1px solid #ececec"></div><div class="a" style="left:1621px;top:549px;width:8.00px;height:276.00px;background:#c1c1c1;border-radius:4px"></div>
</div></div>
<div id="vscroll" class="a"><div class="a" style="left:3px;top:3px;width:8px;height:849px;background:#c1c1c1;border-radius:4px"></div></div>
<svg style="left:1650px;top:1007px" width="20" height="20" viewBox="1650 1007 20 20"><path d="M1670 1019.8 Q1669 1025 1663.4 1027 H1670 Z" fill="#000"/></svg>
</body></html>
